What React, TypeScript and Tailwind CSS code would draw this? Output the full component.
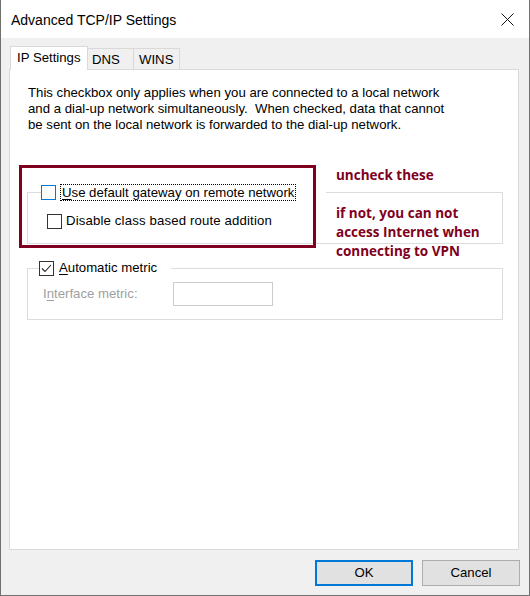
import React from 'react';

const UI_FONT = "font-['Liberation_Sans',Arial,sans-serif]";

function Box({ checked = false, focused = false }: { checked?: boolean; focused?: boolean }) {
  return (
    <span
      className={`inline-flex w-[15px] h-[15px] shrink-0 items-center justify-center bg-white border ${
        focused ? 'border-[#0078d7]' : 'border-[#333333]'
      }`}
    >
      {checked && (
        <svg width="13" height="13" viewBox="0 0 13 13">
          <polyline points="2,6.5 5,9.5 11,3" fill="none" stroke="#222" strokeWidth="1.1" />
        </svg>
      )}
    </span>
  );
}

function TitleBar() {
  return (
    <div className="flex h-[38px] items-center justify-between bg-white pl-[10px] pr-[15px]">
      <span className="text-[14px] leading-[16px] text-black pt-[1px]">Advanced TCP/IP Settings</span>
      <svg width="13" height="13" viewBox="0 0 13 13" className="mt-[1px]">
        <path d="M0.5 0.5 L12.5 12.5 M12.5 0.5 L0.5 12.5" stroke="#111" strokeWidth="1" />
      </svg>
    </div>
  );
}

function Tabs() {
  return (
    <div className="relative z-10 flex items-end px-[9px]">
      <div className="-mb-px flex h-[24px] w-[78px] items-start border border-b-0 border-[#d9d9d9] bg-white pl-[6px] pt-[3px] text-[13.2px] leading-[16px]">
        IP Settings
      </div>
      <div className="flex h-[21px] w-[46px] items-start border border-l-0 border-b-0 border-[#d9d9d9] pl-[4px] pt-[3px] text-[13.2px] leading-[16px]">
        DNS
      </div>
      <div className="flex h-[21px] w-[46px] items-start border border-l-0 border-b-0 border-[#d9d9d9] pl-[5px] pt-[3px] text-[13.2px] leading-[16px]">
        WINS
      </div>
    </div>
  );
}

function Panel() {
  return (
    <div className="relative h-[481px] border border-[#d9d9d9] bg-white pt-[15px] text-[13.2px] leading-[16px] text-black">
      <p className="pl-[18px]">
        This checkbox only applies when you are connected to a local network
        <br />
        and a dial-up network simultaneously.&nbsp; When checked, data that cannot
        <br />
        be sent on the local network is forwarded to the dial-up network.
      </p>

      <fieldset className="ml-[17px] mt-[51px] w-[476px] border border-[#dcdcdc] pb-[14px]">
        <legend className="ml-[13px] flex h-[17px] w-[285px] items-center">
          <Box focused />
          <span className="ml-[4px] border border-dotted border-black px-[1px] leading-[15px]">
            <span className="underline underline-offset-2">U</span>se default gateway on remote network
          </span>
        </legend>
        <div className="mt-[12px] flex h-[16px] items-center pl-[19px]">
          <Box />
          <span className="ml-[4px] tracking-[0.15px]">Disable class based route addition</span>
        </div>
      </fieldset>

      <fieldset className="ml-[17px] mt-[16px] w-[476px] border border-[#dcdcdc] pb-[13px]">
        <legend className="ml-[11px] flex h-[16px] w-[132px] items-center">
          <Box checked />
          <span className="ml-[5px]">
            <span className="underline underline-offset-2">A</span>utomatic metric
          </span>
        </legend>
        <div className="mt-[6px] flex items-center pl-[15px]">
          <span className="w-[130px] text-[#a0a0a0]">
            I<span className="underline underline-offset-2">n</span>terface metric:
          </span>
          <span className="h-[24px] w-[100px] border border-[#cccccc] bg-white" />
        </div>
      </fieldset>

      {/* annotation drawn over the dialog */}
      <div className="pointer-events-none absolute left-[9px] top-[95px] h-[83px] w-[297px] border-[3px] border-[#800020]" />
      <div className="absolute left-[326px] top-[96px] font-['Open_Sans',sans-serif] text-[13.5px] font-bold leading-[19px] text-[#800020]">
        uncheck these
        <br />
        <br />
        if not, you can not
        <br />
        access Internet when
        <br />
        connecting to VPN
      </div>
    </div>
  );
}

export default function App() {
  return (
    <div className={`flex h-[596px] w-[530px] flex-col border-x border-b border-[#707070] ${UI_FONT} text-black`}>
      <TitleBar />
      <div className="flex flex-1 flex-col bg-[#f0f0f0] pt-[8px]">
        <Tabs />
        <div className="pl-[8px] pr-[10px]">
          <Panel />
        </div>
        <div className="mt-[10px] flex justify-end gap-[9px] pr-[9px]">
          <button className="h-[26px] w-[98px] border-2 border-[#0078d7] bg-[#e1e1e1] text-[13.2px]">OK</button>
          <button className="h-[26px] w-[98px] border border-[#adadad] bg-[#e1e1e1] text-[13.2px]">Cancel</button>
        </div>
      </div>
    </div>
  );
}
